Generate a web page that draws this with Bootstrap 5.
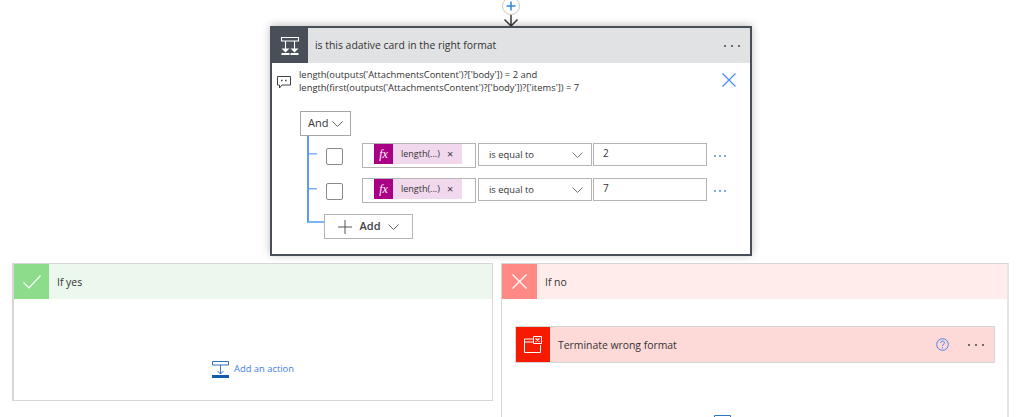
<!DOCTYPE html>
<html lang="en">
<head>
<meta charset="utf-8">
<title>Condition</title>
<link href="https://cdn.jsdelivr.net/npm/bootstrap@5.3.0/dist/css/bootstrap.min.css" rel="stylesheet">
<style>
html,body{height:417px;overflow:hidden;background:#fff}
body{font-family:"Open Sans","Liberation Sans",sans-serif;font-size:10px;color:#333}
.canvas{width:1022px;height:417px;overflow:hidden}
.connector{height:26px}
.plus-ring{width:18px;height:18px;margin-top:-3px;border:1px solid #c8c8c8;border-radius:50%;background:#fff}
.flow-card{width:482px;height:230px;border:2px solid #474e57;background:#fff;box-shadow:0 -1px 8px rgba(0,0,0,.25)}
.flow-head{height:35px;background:#e1e2e4}
.flow-icon{width:36px;height:35px;background:#484f58}
.flow-title{margin-left:7px;font-size:10.4px;color:#333}
.dots{gap:5px}
.dots i{display:block;width:2px;height:2px;border-radius:50%;background:#444}
.dots.blue{gap:3px;margin-top:19px}
.dots.blue i{background:#4f8cf0}
.head-dots{padding-right:10px}
.expr-row{padding:6px 14px 0 5px;height:48px}
.expr-text{margin-left:8px;font-size:9.4px;line-height:12.5px;color:#333;width:400px}
.expr-icon{margin-top:7px}
.expr-close{margin-top:4px}
.tree{margin-left:27px}
.and-box{width:51px;height:25px;margin-left:1px;border:1px solid #a6a6a6;font-size:11px;padding:0 7px}
.tree-row{height:35px;padding-left:8px}
.twig{width:10px;height:35px;margin-right:9px;background:linear-gradient(#5a9bf4,#5a9bf4) 0 0/2px 100% no-repeat,linear-gradient(#7fb2f7,#7fb2f7) 0 50%/100% 1.5px no-repeat}
.twig-end{width:17px;height:17px;margin-left:8px;border-left:2px solid #5a9bf4;border-bottom:2px solid #7fb2f7}
.check{width:17px;height:17px;border:1.5px solid #8a8a8a;border-radius:2px;margin:12px 19px 0 0}
.token-box{width:114px;height:25px;margin-top:7px;border:1px solid #b4b4b4;padding-left:11px;margin-right:2px}
.tok{width:88px;height:20px;background:#f2d8ec;font-size:9px;color:#333}
.tok-fx{width:19px;height:20px;background:#aa0085;color:#fff;font-family:"Liberation Serif",serif;font-style:italic;font-size:12px}
.tok-x{font-size:11px;color:#333;margin-left:7px}
.sel{width:114px;height:23px;margin:7px 1px 0 0;border:1px solid #b4b4b4;padding:1px 8px 0 10px;font-size:9.4px}
.val{width:114px;height:23px;margin:7px 7px 0 0;border:1px solid #b4b4b4;padding:0 9px 2px;font-size:10px}
.add-btn{width:89px;height:25px;margin-top:8px;border:1px solid #b4b4b4;background:#fff;font-size:11px;font-weight:600;color:#444}
.branches{margin-top:7px;padding-left:12px;gap:8px}
.branch{border:1px solid #d6d6d6;background:#fff;flex:none}
.branch-yes{width:481px;height:138px;border-width:1px 1px 1px 2px}
.branch-no{width:508px;height:300px;border-width:1px 2px 1px 1px;border-right-color:#e6e6e6}
.branch-head{height:35px;font-size:10.4px}
.branch-label{padding-top:2px}
.yes-head{background:#ecf7ee}.no-head{background:#ffeceb}
.branch-sq{width:35px;height:35px;margin-right:8px}
.yes-sq{background:#8cdc8c}.no-sq{background:#ff8a85}
.add-action{font-size:9.4px;color:#3f7fe8;gap:5px}
.add-yes{padding-top:62px}
.term-card{width:480px;height:37px;margin:27px 0 0 13px;border:1px solid #d6d6d6;background:#fddad8;font-size:10.4px}
.term-sq{width:34px;height:35px;background:#f51a00;margin-right:8px}
.term-label{padding-top:2px}
.term-tools{margin-left:auto;padding-right:10px;gap:19px}
.add-no{margin-top:52px;padding-right:64px}
</style>
</head>
<body class="m-0">
<div class="canvas d-flex flex-column">
  <div class="connector d-flex flex-column align-items-center">
    <div class="plus-ring d-flex align-items-center justify-content-center flex-shrink-0">
      <svg width="10" height="10" viewBox="0 0 10 10"><path d="M5 .5v9M.5 5h9" stroke="#2f86d8" stroke-width="1.5" fill="none"/></svg>
    </div>
    <svg width="16" height="12" viewBox="0 0 16 12" class="flex-shrink-0"><path d="M8 0v11M1.500 4.500 8 11l6.500-6.500" stroke="#3a3a3a" stroke-width="1.500" fill="none"/></svg>
  </div>

  <div class="flow-card mx-auto flex-shrink-0 d-flex flex-column">
    <div class="flow-head d-flex align-items-center">
      <div class="flow-icon d-flex align-items-center justify-content-center">
        <svg width="20" height="20" viewBox="0 0 20 20" fill="none" stroke="#fff"><path d="M1.500 1.500h17v3.500h-17zM5.500 5v8M14.500 5v8" stroke-width="1.100"/><path d="M1.500 12.500h8l-4 4zM10.500 12.500h8l-4 4z" fill="#fff" stroke="none"/><path d="M1.500 18h8M10.500 18h8" stroke-width="2"/></svg>
      </div>
      <div class="flow-title flex-grow-1">is this adative card in the right format</div>
      <div class="dots head-dots d-flex"><i></i><i></i><i></i></div>
    </div>
    <div class="expr-row d-flex align-items-start">
      <svg class="expr-icon flex-shrink-0" width="14" height="13" viewBox="0 0 14 13" fill="none" stroke="#444"><path d="M.5.500h13v8.500H5L2.500 12V9H.5z"/><path d="M4 4.500h1.500M8 4.500h1.500" stroke-width="1.400"/></svg>
      <div class="expr-text flex-shrink-0">length(outputs('AttachmentsContent')?['body']) = 2 and<br>length(first(outputs('AttachmentsContent')?['body'])?['items']) = 7</div>
      <svg class="expr-close ms-auto flex-shrink-0" width="14" height="14" viewBox="0 0 14 14"><path d="M.5.500l13 13M13.500.500l-13 13" stroke="#4a8df0" stroke-width="1.200" fill="none"/></svg>
    </div>
    <div class="tree">
      <div class="and-box d-flex align-items-center justify-content-between">And
        <svg width="11" height="6" viewBox="0 0 11 6"><path d="M.5.500l5 5 5-5" stroke="#666" fill="none"/></svg>
      </div>
      <div class="tree-row d-flex align-items-start">
        <div class="twig"></div><div class="check"></div>
        <div class="token-box d-flex align-items-start"><div class="tok d-flex align-items-center"><span class="tok-fx d-flex align-items-center justify-content-center me-2">fx</span>length(...)<span class="tok-x">×</span></div></div>
        <div class="sel d-flex align-items-center justify-content-between">is equal to<svg width="11" height="6" viewBox="0 0 11 6"><path d="M.5.500l5 5 5-5" stroke="#777" fill="none"/></svg></div>
        <div class="val d-flex align-items-center">2</div>
        <div class="dots blue d-flex"><i></i><i></i><i></i></div>
      </div>
      <div class="tree-row d-flex align-items-start">
        <div class="twig"></div><div class="check"></div>
        <div class="token-box d-flex align-items-start"><div class="tok d-flex align-items-center"><span class="tok-fx d-flex align-items-center justify-content-center me-2">fx</span>length(...)<span class="tok-x">×</span></div></div>
        <div class="sel d-flex align-items-center justify-content-between">is equal to<svg width="11" height="6" viewBox="0 0 11 6"><path d="M.5.500l5 5 5-5" stroke="#777" fill="none"/></svg></div>
        <div class="val d-flex align-items-center">7</div>
        <div class="dots blue d-flex"><i></i><i></i><i></i></div>
      </div>
      <div class="d-flex align-items-start">
        <div class="twig-end"></div>
        <div class="add-btn d-flex align-items-center justify-content-center gap-2">
          <svg width="14" height="14" viewBox="0 0 14 14"><path d="M7 0v14M0 7h14" stroke="#555" fill="none"/></svg>Add
          <svg width="11" height="6" viewBox="0 0 11 6"><path d="M.5.500l5 5 5-5" stroke="#666" fill="none"/></svg>
        </div>
      </div>
    </div>
  </div>

  <div class="branches d-flex align-items-start">
    <div class="branch branch-yes">
      <div class="branch-head yes-head d-flex align-items-center">
        <div class="branch-sq yes-sq d-flex align-items-center justify-content-center"><svg width="18" height="14" viewBox="0 0 18 14"><path d="M.5 7.500 6 13 17.500.500" stroke="#fff" stroke-width="1.200" fill="none"/></svg></div><span class="branch-label">If yes</span>
      </div>
      <div class="add-yes add-action d-flex align-items-center justify-content-center">
        <svg width="17" height="17" viewBox="0 0 17 17" fill="none"><path d="M.5.500h16v3.500H.5z" stroke="#2f73c0"/><path d="M8.500 4v9M5.500 10l3 3 3-3" stroke="#2f73c0"/><path d="M0 14h17v3H0z" fill="#0f5cac"/></svg>
        <span>Add an action</span>
      </div>
    </div>
    <div class="branch branch-no">
      <div class="branch-head no-head d-flex align-items-center">
        <div class="branch-sq no-sq d-flex align-items-center justify-content-center"><svg width="15" height="15" viewBox="0 0 15 15"><path d="M.5.500l14 14M14.500.500l-14 14" stroke="#fff" stroke-width="1.200" fill="none"/></svg></div><span class="branch-label">If no</span>
      </div>
      <div class="term-card d-flex align-items-center">
        <div class="term-sq d-flex align-items-center justify-content-center"><svg width="18" height="17" viewBox="0 0 18 17" fill="none" stroke="#fff"><path d="M9 3H.5v13.500h16V9M.5 6H9"/><path d="M9.500.500h8v7h-8z"/><path d="M11.500 2.500l4 3M15.500 2.500l-4 3" stroke-width="1.200"/></svg></div>
        <span class="term-label">Terminate wrong format</span>
        <div class="term-tools d-flex align-items-center">
          <svg width="13" height="13" viewBox="0 0 13 13" fill="none" stroke="#4a7ff0"><circle cx="6.500" cy="6.500" r="5.800"/><path d="M4.600 5c0-2.600 3.800-2.600 3.800-.2 0 1.500-1.900 1.500-1.900 3.200"/><path d="M6.500 9v1.200"/></svg>
          <div class="dots d-flex"><i></i><i></i><i></i></div>
        </div>
      </div>
      <div class="add-no add-action d-flex align-items-start justify-content-center">
        <svg width="17" height="17" viewBox="0 0 17 17" fill="none"><path d="M.5.500h16v3.500H.5z" stroke="#2f73c0"/><path d="M8.500 4v9M5.500 10l3 3 3-3" stroke="#2f73c0"/><path d="M0 14h17v3H0z" fill="#0f5cac"/></svg>
      </div>
    </div>
  </div>
</div>
</body>
</html>
